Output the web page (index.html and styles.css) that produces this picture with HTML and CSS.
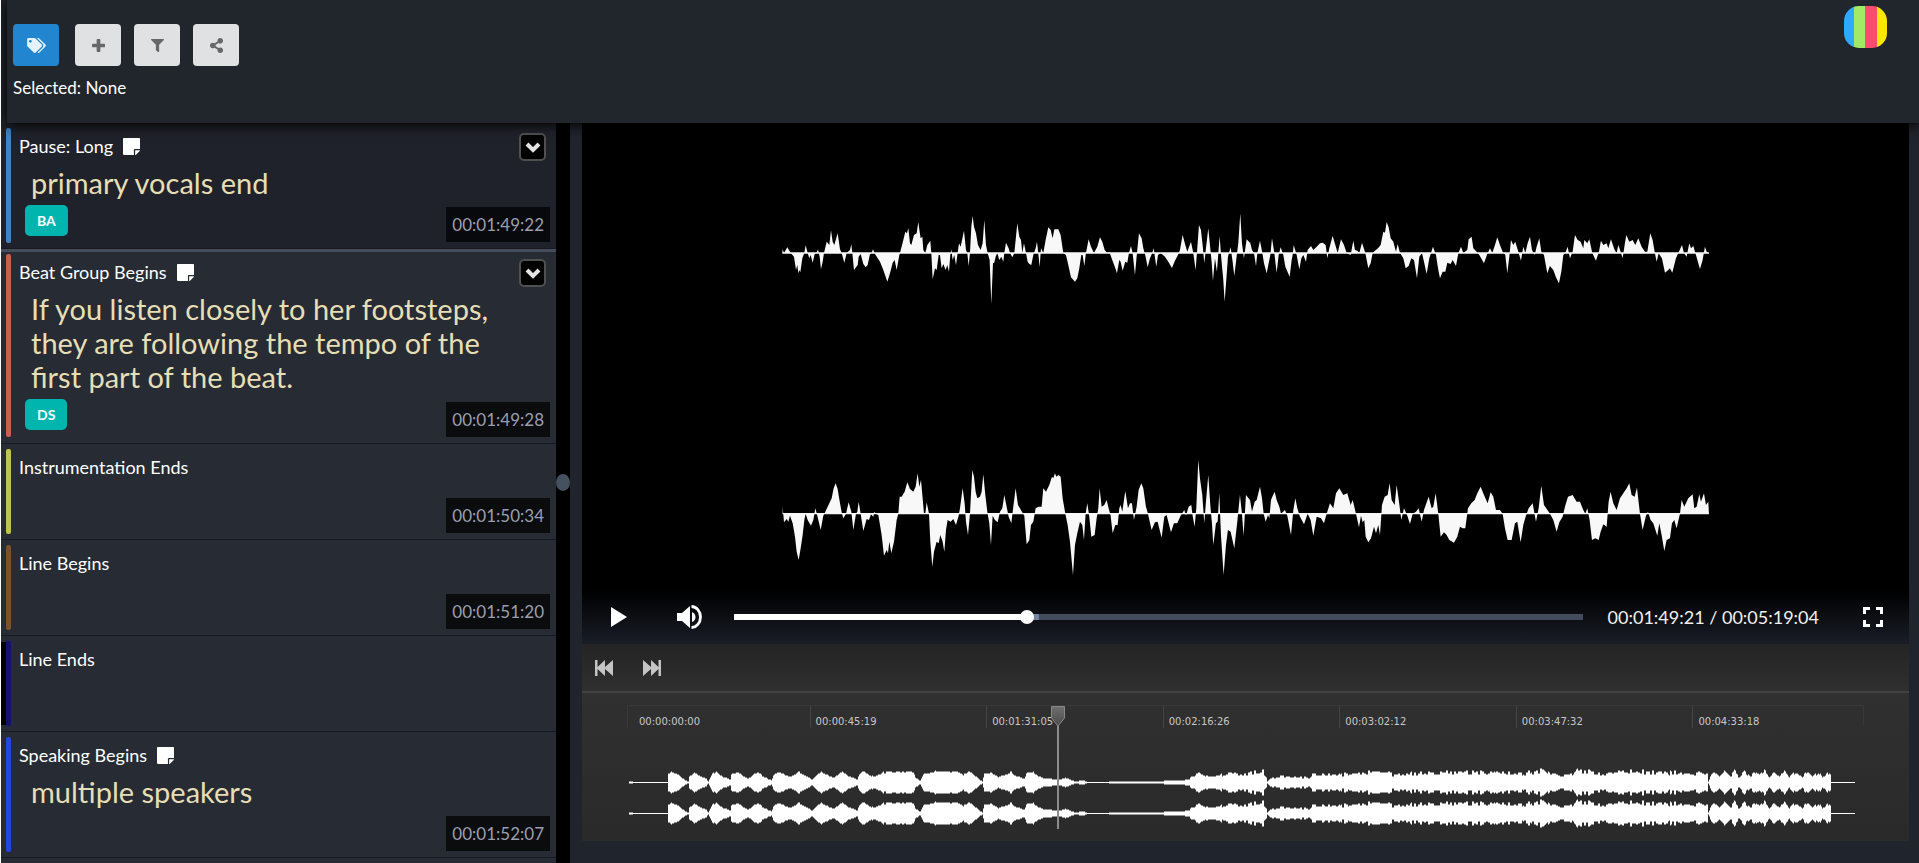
FILE: index.html
```html
<!DOCTYPE html>
<html lang="en">
<head>
<meta charset="utf-8">
<title>Audio annotations</title>
<link rel="stylesheet" href="styles.css">
</head>
<body>
<svg class="sprite" aria-hidden="true">
  <symbol id="note" viewBox="0 32 448 448"><path d="M312 320h136V56c0-13-11-24-24-24H24C11 32 0 43 0 56v400c0 13 11 24 24 24h264V344c0-13 11-24 24-24zm129 55l-98 98c-5 5-11 7-17 7h-6V352h128v6c0 6-2 12-7 17z"/></symbol>
  <symbol id="chevron" viewBox="0 0 16 12"><path d="M2 3l6 6 6-6" fill="none" stroke="currentColor" stroke-width="4"/></symbol>
</svg>
<header class="topbar">
  <div class="tools">
    <div class="buttons">
      <button class="tool tool-primary" type="button" aria-label="Tags"><svg class="icon-tags" viewBox="0 0 640 512"><path d="M497.900 226L286 14A48 48 0 0 0 252 0H48C21.500 0 0 21.500 0 48v204a48 48 0 0 0 14 34l212 212c19 19 49 19 68 0l204-204c19-19 19-49 0-68zM112 160c-26.500 0-48-21.500-48-48s21.500-48 48-48 48 21.500 48 48-21.500 48-48 48zm514 134L422 498c-19 19-49 19-68 0l174-174c17-17 26-40 26-64s-9-47-26-64L331 0h49a48 48 0 0 1 34 14l212 212c19 19 19 49 0 68z"/></svg></button>
      <button class="tool tool-add" type="button" aria-label="Add"><svg class="icon-small" viewBox="0 0 14 14"><path d="M5 1q0-1 1-1h2q1 0 1 1v4h4q1 0 1 1v2q0 1-1 1H9v4q0 1-1 1H6q-1 0-1-1V9H1q-1 0-1-1V6q0-1 1-1h4z"/></svg></button>
      <button class="tool" type="button" aria-label="Filter"><svg class="icon-small" viewBox="0 0 512 512"><path d="M488 0H24C3 0-8 26 7 41l185 185v206c0 8 4 15 10 20l80 56c16 11 38 0 38-20V226L505 41c15-15 4-41-17-41z"/></svg></button>
      <button class="tool" type="button" aria-label="Share"><svg class="icon-share" viewBox="0 0 448 512"><path d="M352 320c-23 0-43 8-60 21l-102-64a97 97 0 0 0 0-42l102-64c17 13 37 21 60 21 53 0 96-43 96-96S405 0 352 0s-96 43-96 96c0 7 1 14 2 21l-102 64c-17-13-37-21-60-21-53 0-96 43-96 96s43 96 96 96c23 0 43-8 60-21l102 64a96 96 0 0 0-2 21c0 53 43 96 96 96s96-43 96-96-43-96-96-96z"/></svg></button>
    </div>
    <div class="selected">Selected: None</div>
  </div>
  <a class="logo" href="#" aria-label="Home"></a>
</header>
<main class="workspace">
  <section class="annotations" aria-label="Annotations">
    <article class="row row-past">
      <span class="bar bar-blue"></span>
      <div class="body">
        <h2 class="title">Pause: Long <svg class="note"><use href="#note"/></svg></h2>
        <p class="comment">primary vocals end</p>
        <span class="tag">BA</span>
      </div>
      <button class="toggle" type="button" aria-label="Expand"><svg><use href="#chevron"/></svg></button>
      <time class="time">00:01:49:22</time>
    </article>
    <article class="row row-current">
      <span class="bar bar-red"></span>
      <div class="body">
        <h2 class="title">Beat Group Begins <svg class="note"><use href="#note"/></svg></h2>
        <p class="comment">If you listen closely to her footsteps, they are following the tempo of the first part of the beat.</p>
        <span class="tag">DS</span>
      </div>
      <button class="toggle" type="button" aria-label="Expand"><svg><use href="#chevron"/></svg></button>
      <time class="time">00:01:49:28</time>
    </article>
    <article class="row">
      <span class="bar bar-lime"></span>
      <div class="body"><h2 class="title">Instrumentation Ends</h2></div>
      <time class="time">00:01:50:34</time>
    </article>
    <article class="row">
      <span class="bar bar-brown"></span>
      <div class="body"><h2 class="title">Line Begins</h2></div>
      <time class="time">00:01:51:20</time>
    </article>
    <article class="row row-focus">
      <span class="bar bar-navy"></span>
      <div class="body"><h2 class="title">Line Ends</h2></div>
    </article>
    <article class="row">
      <span class="bar bar-royal"></span>
      <div class="body body-note">
        <h2 class="title">Speaking Begins <svg class="note"><use href="#note"/></svg></h2>
        <p class="comment">multiple speakers</p>
      </div>
      <time class="time">00:01:52:07</time>
    </article>
    <div class="row-rest"></div>
  </section>
  <div class="splitter"><span class="grip"></span></div>
  <section class="player" aria-label="Player">
    <div class="stage">
      <svg class="waves" viewBox="582 123 1327 521">
        <g transform="translate(770 190) scale(.3333)"><path d="M37 189L38 178 42 189 52 172 62 189 72 200 78 240 82 225 85 250 88 240 91 247 97 205 103 189 107 166 113 189 118 205 122 195 128 218 134 192 140 189 144 178 149 200 153 238 158 215 162 189 170 155 178 165 183 121 188 155 193 165 203 130 210 178 215 189 223 218 230 189 240 180 244 163 247 189 252 240 258 232 263 225 266 200 272 192 280 222 287 232 293 225 300 192 305 189 309 178 315 192 330 215 340 240 352 275 360 250 368 218 374 210 380 240 388 195 390 189 400 150 406 125 411 130 415 114 420 160 424 165 432 135 440 130 445 96 449 125 452 145 457 140 460 180 466 189 472 165 481 152 484 189 488 268 495 235 500 240 506 195 510 195 515 235 520 222 527 240 532 225 537 245 541 195 544 178 548 210 553 195 558 225 563 189 567 160 572 170 582 122 588 180 592 189 596 228 600 189 604 110 608 78 612 110 618 130 624 165 632 180 638 160 643 90 648 165 653 189 659 210 664 342 669 220 673 218 677 200 682 189 688 210 694 200 700 215 703 189 708 158 716 175 720 189 727 202 733 189 738 140 742 100 748 140 753 150 757 189 762 160 768 189 773 215 778 222 784 225 790 195 797 175 801 155 806 200 809 232 813 175 820 189 827 150 835 112 842 120 848 145 853 118 865 118 872 135 880 189 888 195 895 225 903 262 915 275 922 265 928 235 934 195 938 195 943 228 948 189 956 148 963 170 972 189 982 170 990 142 997 155 1004 180 1012 189 1018 185 1025 205 1035 232 1041 250 1048 210 1052 215 1058 242 1066 215 1072 218 1077 189 1083 168 1088 189 1095 255 1101 189 1107 130 1115 145 1120 175 1127 200 1133 232 1140 205 1147 189 1151 175 1159 230 1164 195 1172 189 1185 200 1195 215 1206 234 1215 212 1224 195 1230 180 1238 135 1246 165 1252 185 1263 155 1270 189 1277 240 1282 175 1287 105 1293 120 1298 165 1303 220 1308 175 1315 115 1320 165 1325 215 1329 272 1335 205 1341 245 1349 138 1354 205 1360 270 1364 335 1369 270 1374 200 1382 172 1388 215 1393 258 1400 200 1405 160 1411 70 1416 160 1422 205 1430 148 1440 158V189z"/><path d="M37 187H1440V191H37z"/></g>
        <g transform="translate(1240 190) scale(.3333)"><path d="M30 189V155L36 180 42 189 48 228 52 189 60 152 67 189 72 220 80 250 86 220 91 195 96 145 103 189 110 248 116 195 122 172 130 195 136 230 149 260 155 210 158 195 161 165 170 195 178 238 184 205 190 195 198 215 203 180 213 168 220 180 230 170 240 160 248 158 257 165 262 205 268 175 278 138 286 165 293 189 303 148 312 165 320 189 332 195 340 152 345 180 352 182 358 189 366 158 376 189 385 235 392 220 398 189 404 183 414 175 422 165 430 125 435 128 440 96 446 112 452 145 460 155 468 185 473 162 480 189 490 205 497 235 506 228 514 205 522 210 531 265 538 200 546 189 552 215 560 252 568 205 573 189 579 170 588 195 595 240 600 265 608 245 616 245 622 218 632 222 638 210 648 228 655 190 663 170 670 189 682 180 686 148 695 140 700 175 710 185 718 195 732 220 742 192 750 175 757 189 765 165 772 142 780 165 788 185 796 195 802 250 808 200 813 150 820 165 826 155 835 185 843 212 850 170 856 189 863 160 870 140 876 180 884 195 890 170 898 145 904 185 912 195 922 250 930 228 940 240 948 262 957 280 964 245 970 195 976 189 983 170 990 205 998 185 1005 135 1013 150 1022 155 1030 175 1033 150 1042 160 1048 148 1057 189 1068 212 1077 185 1083 152 1090 165 1100 160 1105 175 1113 148 1124 180 1130 189 1135 165 1142 185 1148 205 1154 165 1159 135 1168 155 1178 150 1186 165 1195 145 1205 170 1215 185 1222 185 1231 130 1238 150 1244 185 1250 215 1256 190 1266 205 1275 248 1285 240 1290 235 1297 248 1308 205 1315 189 1326 165 1332 189 1340 200 1348 160 1353 175 1360 168 1368 195 1380 237 1388 210 1395 170 1400 185 1407 192V189z"/><path d="M30 187H1407V191H30z"/></g>
        <g transform="translate(770 445) scale(.3333)"><path d="M38 206V185L42 232 50 222 55 230 60 212 68 235 75 275 80 320 86 345 92 310 98 270 103 225 107 206 113 225 123 242 130 225 136 190 142 212 152 255 160 212 166 200 178 175 185 160 191 130 197 115 203 132 210 175 216 206 220 220 228 206 236 172 244 200 250 255 258 206 262 200 266 170 272 206 280 258 290 222 297 225 303 208 310 215 313 200 318 206 325 210 335 270 342 332 350 315 354 325 358 290 364 325 372 290 380 225 385 206 389 155 395 155 404 140 412 112 420 132 430 140 437 125 443 85 448 125 453 105 458 160 462 206 466 206 470 172 477 206 481 290 487 365 492 320 500 290 506 295 511 270 518 290 523 320 528 255 533 225 542 230 550 222 558 240 566 212 570 190 578 130 584 175 588 230 594 270 600 206 604 130 607 75 612 95 617 140 622 160 630 155 635 140 640 88 646 150 652 200 658 235 663 300 668 212 675 225 683 232 690 200 697 190 703 150 710 185 716 215 724 235 730 185 737 130 744 180 756 200 763 212 770 298 778 285 783 240 790 230 797 190 806 185 815 185 820 130 828 140 838 120 846 95 850 100 855 85 859 95 865 90 872 95 878 160 885 200 893 240 900 290 909 390 915 300 922 265 930 230 937 240 942 285 947 206 952 175 958 215 964 275 974 270 980 220 985 190 989 130 995 185 1003 180 1010 165 1016 190 1022 212 1028 265 1036 240 1043 240 1048 190 1052 180 1057 200 1066 138 1074 190 1080 175 1086 175 1092 225 1100 185 1106 135 1114 115 1120 130 1128 185 1134 206 1145 255 1155 232 1163 230 1175 278 1183 215 1190 210 1203 262 1212 235 1222 235 1232 212 1243 195 1248 212 1256 185 1264 180 1268 212 1274 245 1279 190 1285 45 1290 100 1297 150 1303 235 1308 170 1315 90 1321 180 1326 235 1330 300 1338 235 1343 230 1348 145 1353 270 1361 390 1368 300 1374 255 1382 260 1393 310 1402 230 1410 150 1416 206 1421 272 1428 150 1440 165V206z"/><path d="M38 204H1440V208H38z"/></g>
        <g transform="translate(1240 445) scale(.3333)"><path d="M30 206V165L36 200 44 170 50 165 60 125 66 160 71 206 77 230 84 210 88 220 93 165 97 155 104 140 110 165 118 185 123 206 135 195 142 212 153 270 160 195 166 160 172 190 180 215 192 238 203 206 212 225 220 272 230 215 243 220 252 235 260 206 270 175 280 190 288 145 298 130 310 150 322 145 332 180 338 165 348 206 357 247 363 212 368 232 373 225 377 275 385 292 393 280 402 245 408 265 415 240 420 270 426 180 434 155 443 150 449 115 455 165 464 180 470 120 477 170 484 225 492 190 502 212 510 237 518 206 528 200 536 190 545 230 552 195 566 155 575 190 580 185 587 145 595 206 602 275 612 262 620 270 628 285 642 293 652 275 660 245 668 250 676 250 684 190 694 175 704 165 712 145 722 125 732 150 743 175 752 142 760 155 768 195 780 195 788 206 795 250 803 285 815 285 825 235 832 230 842 292 850 240 857 215 866 190 878 175 888 230 896 190 904 122 912 180 930 206 940 225 950 260 958 232 968 215 975 185 984 155 998 150 1010 170 1020 170 1030 195 1036 206 1042 190 1049 225 1056 285 1066 280 1076 285 1082 260 1090 238 1100 245 1106 170 1112 140 1120 175 1130 195 1140 160 1150 145 1160 130 1168 115 1175 150 1184 155 1191 128 1200 206 1208 255 1218 212 1224 200 1232 225 1240 235 1252 272 1258 235 1265 270 1273 318 1280 285 1290 280 1296 235 1303 225 1310 250 1320 206 1325 165 1333 185 1345 160 1358 148 1363 190 1370 185 1378 148 1383 170 1392 145 1398 180 1405 170 1407 206z"/><path d="M30 204H1407V208H30z"/></g>
      </svg>
      <div class="controls">
        <button class="control play" type="button" aria-label="Play"><svg viewBox="0 0 16 20"><path d="M0 0l16 10L0 20z"/></svg></button>
        <button class="control volume" type="button" aria-label="Volume"><svg viewBox="0 0 25 24"><path d="M0 8h5l8-7v22l-8-7H0zM15 7q3.500 1.500 3.500 5T15 17z"/><path d="M14.500 1.500a9 10.500 0 0 1 0 21" fill="none" stroke="#fff" stroke-width="2.800"/></svg></button>
        <input class="seek" type="range" min="0" max="1000" value="343" aria-label="Position">
        <div class="clock">00:01:49:21 / 00:05:19:04</div>
        <button class="control full" type="button" aria-label="Full screen"><svg viewBox="0 0 20 20"><path d="M1.500 7V1.500H7M13 1.500h5.500V7M18.500 13v5.500H13M7 18.500H1.500V13" fill="none" stroke="#fff" stroke-width="3"/></svg></button>
      </div>
    </div>
    <div class="timeline">
      <div class="steps">
        <button class="step" type="button" aria-label="Previous"><svg viewBox="0 0 18 16"><path d="M0 0h2.500v7L10 0v7l8-7v16l-8-7v7L2.500 9v7H0z"/></svg></button>
        <button class="step" type="button" aria-label="Next"><svg viewBox="0 0 18 16"><path d="M18 0h-2.500v7L8 0v7L0 0v16l8-7v7l7.500-7v7H18z"/></svg></button>
      </div>
      <div class="track">
        <div class="ruler">
          <span>00:00:00:00</span><span>00:00:45:19</span><span>00:01:31:05</span><span>00:02:16:26</span><span>00:03:02:12</span><span>00:03:47:32</span><span>00:04:33:18</span>
        </div>
        <svg class="overview" viewBox="582 765 1327 66" preserveAspectRatio="none"><path id="overview"/></svg>
        <div class="playhead"><svg viewBox="0 0 14 20"><defs><linearGradient id="knob" x2="0" y2="1"><stop stop-color="#6e6e6e"/><stop offset="1" stop-color="#4c4c4c"/></linearGradient></defs><path d="M.5.5h13V12L7.500 19.500h-1L.5 12z" fill="url(#knob)" stroke="#888"/></svg></div>
      </div>
    </div>
  </section>
</main>
<script src="overview.js"></script>
</body>
</html>
```
FILE: overview.js
```js
// Loudness envelope of the whole recording: [x, half height] pairs.
const envelope = [
  [629,1.5],[632,1],[634,.5],[667,.5],[668,9],[673,11],[677,8],[685,2],[688,1],[689,6],[694,10],[698,7],[706,4],[708,1],[712,9],[716,11],[720,7],[730,3],[731,9],[737,10],[742,7],[748,4],[757,11],[762,7],[771,2],[774,9],[779,11],[785,7],[791,6],[799,11],[803,8],[812,3],[816,8],[821,11],[825,8],[833,5],[842,11],[847,7],[857,3],[859,8],[863,11],[868,8],[875,6],[882,10],[893,11],[913,11],[915,5],[920,2],[923,9],[935,11],[957,11],[963,8],[969,11],[973,8],[982,1],[984,9],[991,10],[998,6],[1003,7],[1011,11],[1015,7],[1024,4],[1026,9],[1033,11],[1037,7],[1045,4],[1060,3],[1065,5],[1070,3],[1075,1],[1083,2],[1088,.5],[1105,.5],[1112,1.5],[1127,1],[1150,1],[1177,2],[1189,3],[1191,8],[1200,11],[1205,7],[1217,8],[1230,11],[1250,11],[1263,13],[1266,8],[1267,1],[1270,5],[1280,7],[1293,6],[1310,6],[1312,10],[1323,10],[1337,8],[1350,11],[1360,12],[1387,12],[1393,9],[1420,11],[1450,12],[1490,12],[1520,10],[1535,13],[1543,14],[1550,9],[1567,9],[1577,13],[1587,13],[1603,10],[1630,13],[1653,12],[1680,11],[1707,11],[1708,2],[1711,9],[1714,13],[1719,7],[1724,14],[1729,7],[1734,13],[1739,7],[1744,13],[1749,7],[1754,13],[1759,8],[1764,13],[1769,7],[1774,13],[1779,7],[1784,13],[1789,7],[1797,13],[1802,6],[1807,13],[1812,7],[1818,13],[1822,6],[1829,13],[1830,10],[1831,.5],[1855,.5]
];
let d = "", k = 0;
for (let x = 629; x < 1855; x++) {
  while (envelope[k + 1][0] <= x && k < envelope.length - 2) k++;
  const [x0, a] = envelope[k], [x1, b] = envelope[k + 1];
  const level = a + (b - a) * (x - x0) / (x1 - x0);
  const noise = Math.abs(Math.sin((x >> 1) * 12.9898) * 43758.5) % 1;
  const rough = x > 1190 ? .4 : .15;
  const h = level < 1 ? .5 : Math.max(1, Math.round(level * (1.05 - rough * noise)));
  for (const c of [782.5, 813.5]) d += `M${x} ${c - h}h1v${2 * h}h-1z`;
}
document.getElementById("overview").setAttribute("d", d);
```
FILE: styles.css
```css
* { box-sizing: border-box; }
body {
  margin: 0;
  min-height: 100vh;
  display: flex;
  flex-direction: column;
  border-left: 1px solid #fff;
  background: #20242c;
  color: #fff;
  font-family: Lato, sans-serif;
  font-size: 17px;
}
button { border: 0; padding: 0; background: none; color: inherit; font: inherit; cursor: pointer; }
svg { display: block; fill: currentColor; }
.sprite { position: absolute; width: 0; height: 0; }

.topbar {
  position: relative;
  z-index: 2;
  display: flex;
  justify-content: space-between;
  align-items: flex-start;
  min-height: 123px;
  margin-left: 6px;
  padding: 6px 32px 0 6px;
  background: #21262d;
  box-shadow: 0 2px 12px #000;
}
.tools { padding-top: 18px; }
.buttons { display: flex; gap: 13px; }
.tool {
  display: grid;
  place-items: center;
  width: 46px;
  height: 42px;
  border-radius: 4px;
  background: #e0e1e2;
  color: #676767;
}
.tool-primary { background: #2185d0; color: #e6f2fb; }
.tool-add { margin-left: 3px; }
.icon-tags { width: 19px; height: 15px; }
.icon-small { width: 13px; height: 13px; }
.icon-share { width: 15px; height: 15px; }
.selected { margin-top: 11px; line-height: 22px; }
.logo {
  width: 43px;
  height: 42px;
  border-radius: 15px;
  background: linear-gradient(90deg, #2caaff 0 10px, #a0ea66 10px 21px, #fb4b6e 21px 33px, #ffe800 33px);
}

.workspace { flex: 1; display: grid; grid-template-columns: 555fr 14px 1349fr; }
.annotations { display: flex; flex-direction: column; background: #272b34; }
.row {
  position: relative;
  display: flex;
  min-height: 96px;
  padding: 5px;
  border-bottom: 1px solid #171b21;
}
.row-past { background: #20222b; }
.row-current { padding-bottom: 6px; box-shadow: inset 0 3px #434d5c; }
.row-focus::before { content: ""; position: absolute; left: 0; top: 6px; bottom: 6px; width: 7px; background: #000; }
.row-rest { flex: 1; }
.bar { position: relative; width: 5px; border-radius: 2px; }
.bar-blue { background: #4183c4; }
.bar-red { background: #c85f51; }
.bar-lime { background: #bfc54c; }
.bar-brown { background: #7b5227; }
.bar-navy { background: #13136f; }
.bar-royal { background: #2148dd; }
.body { flex: 1; padding: 7px 58px 7px 8px; }
.body-note { min-height: 115px; }
.title { display: flex; align-items: center; gap: 10px; margin: 0; font-size: 18px; font-weight: 400; line-height: 22px; }
.note { width: 17px; height: 17px; }
.comment { margin: 9px 0 5px 12px; color: #e6deb4; font-size: 29px; line-height: 34px; }
.tag {
  display: block;
  width: max-content;
  margin-left: 6px;
  padding: 0 12px;
  border-radius: 5px;
  background: #00b5ad;
  font-size: 14px;
  font-weight: 700;
  line-height: 31px;
}
.toggle {
  position: absolute;
  top: 10px;
  right: 10px;
  display: grid;
  place-items: center;
  width: 27px;
  height: 28px;
  border: 2px solid #505050;
  border-radius: 5px;
  background: #000;
  color: #e4e4e4;
}
.toggle svg { width: 16px; height: 12px; }
.time {
  position: absolute;
  right: 6px;
  bottom: 6px;
  padding: 0 6px;
  background: #0b0c0e;
  color: #9a9fae;
  line-height: 35px;
}
.row-past .time { background: #08090c; }

.splitter { display: grid; align-items: center; padding-bottom: 22px; background: #000; }
.grip { height: 17px; border-radius: 50%; background: #465160; }

.player { display: flex; flex-direction: column; min-width: 0; padding: 0 10px 22px 12px; }
.stage { flex: 1; display: grid; grid-template-rows: minmax(0, 1fr); background: #000; min-height: 300px; }
.waves { grid-area: 1 / 1; width: 100%; height: 0; min-height: 100%; fill: #f8f8f8; }
.controls {
  grid-area: 1 / 1;
  align-self: end;
  display: flex;
  align-items: center;
  height: 54px;
  padding: 0 26px 0 29px;
  background: linear-gradient(transparent, #191d27);
}
.play svg { width: 16px; height: 20px; }
.volume { margin: 0 32px 0 50px; }
.volume svg { width: 25px; height: 24px; }
.full svg { width: 20px; height: 20px; }
.seek { flex: 1; min-width: 0; height: 14px; margin: 0; appearance: none; background: none; }
.seek::-webkit-slider-runnable-track {
  height: 6px;
  background: linear-gradient(90deg, #fff 0 34.4%, #7385a0 34.4% 35.9%, #434c5d 35.9%);
}
.seek::-webkit-slider-thumb { appearance: none; width: 14px; height: 14px; margin-top: -4px; border-radius: 50%; background: #fff; }
.clock { margin: 0 44px 0 25px; color: #f0f0f0; font-size: 18px; line-height: 22px; white-space: nowrap; }

.timeline { background: linear-gradient(#242424, #303030 50px, #2a2a2a); }
.steps { display: flex; gap: 30px; height: 49px; padding: 16px 13px; border-bottom: 2px solid #434343; }
.step { width: 18px; height: 16px; color: #c4c4c4; }
.track { position: relative; height: 148px; padding-top: 12px; }
.ruler {
  display: grid;
  grid-template-columns: 183fr 177fr 177fr 177fr 177fr 177fr 171fr;
  height: 20px;
  margin: 0 45px;
  border-top: 1px solid #383838;
  border-right: 1px solid #383838;
}
.ruler span {
  padding: 10px 0 0 5px;
  border-left: 1px solid #454545;
  color: #c8c8c8;
  font: 10px/12px "DejaVu Sans", sans-serif;
}
.ruler span:first-child { padding-left: 11px; border-color: #383838; }
.overview { width: 100%; height: 66px; margin-top: 40px; fill: #fff; }
.playhead {
  position: absolute;
  top: 13px;
  left: 35.87%;
  width: 14px;
  height: 123px;
  margin-left: -7px;
  background: linear-gradient(#8c8c8c, #8c8c8c) center / 2px 100% no-repeat;
}
.playhead svg { width: 14px; height: 20px; }
```
